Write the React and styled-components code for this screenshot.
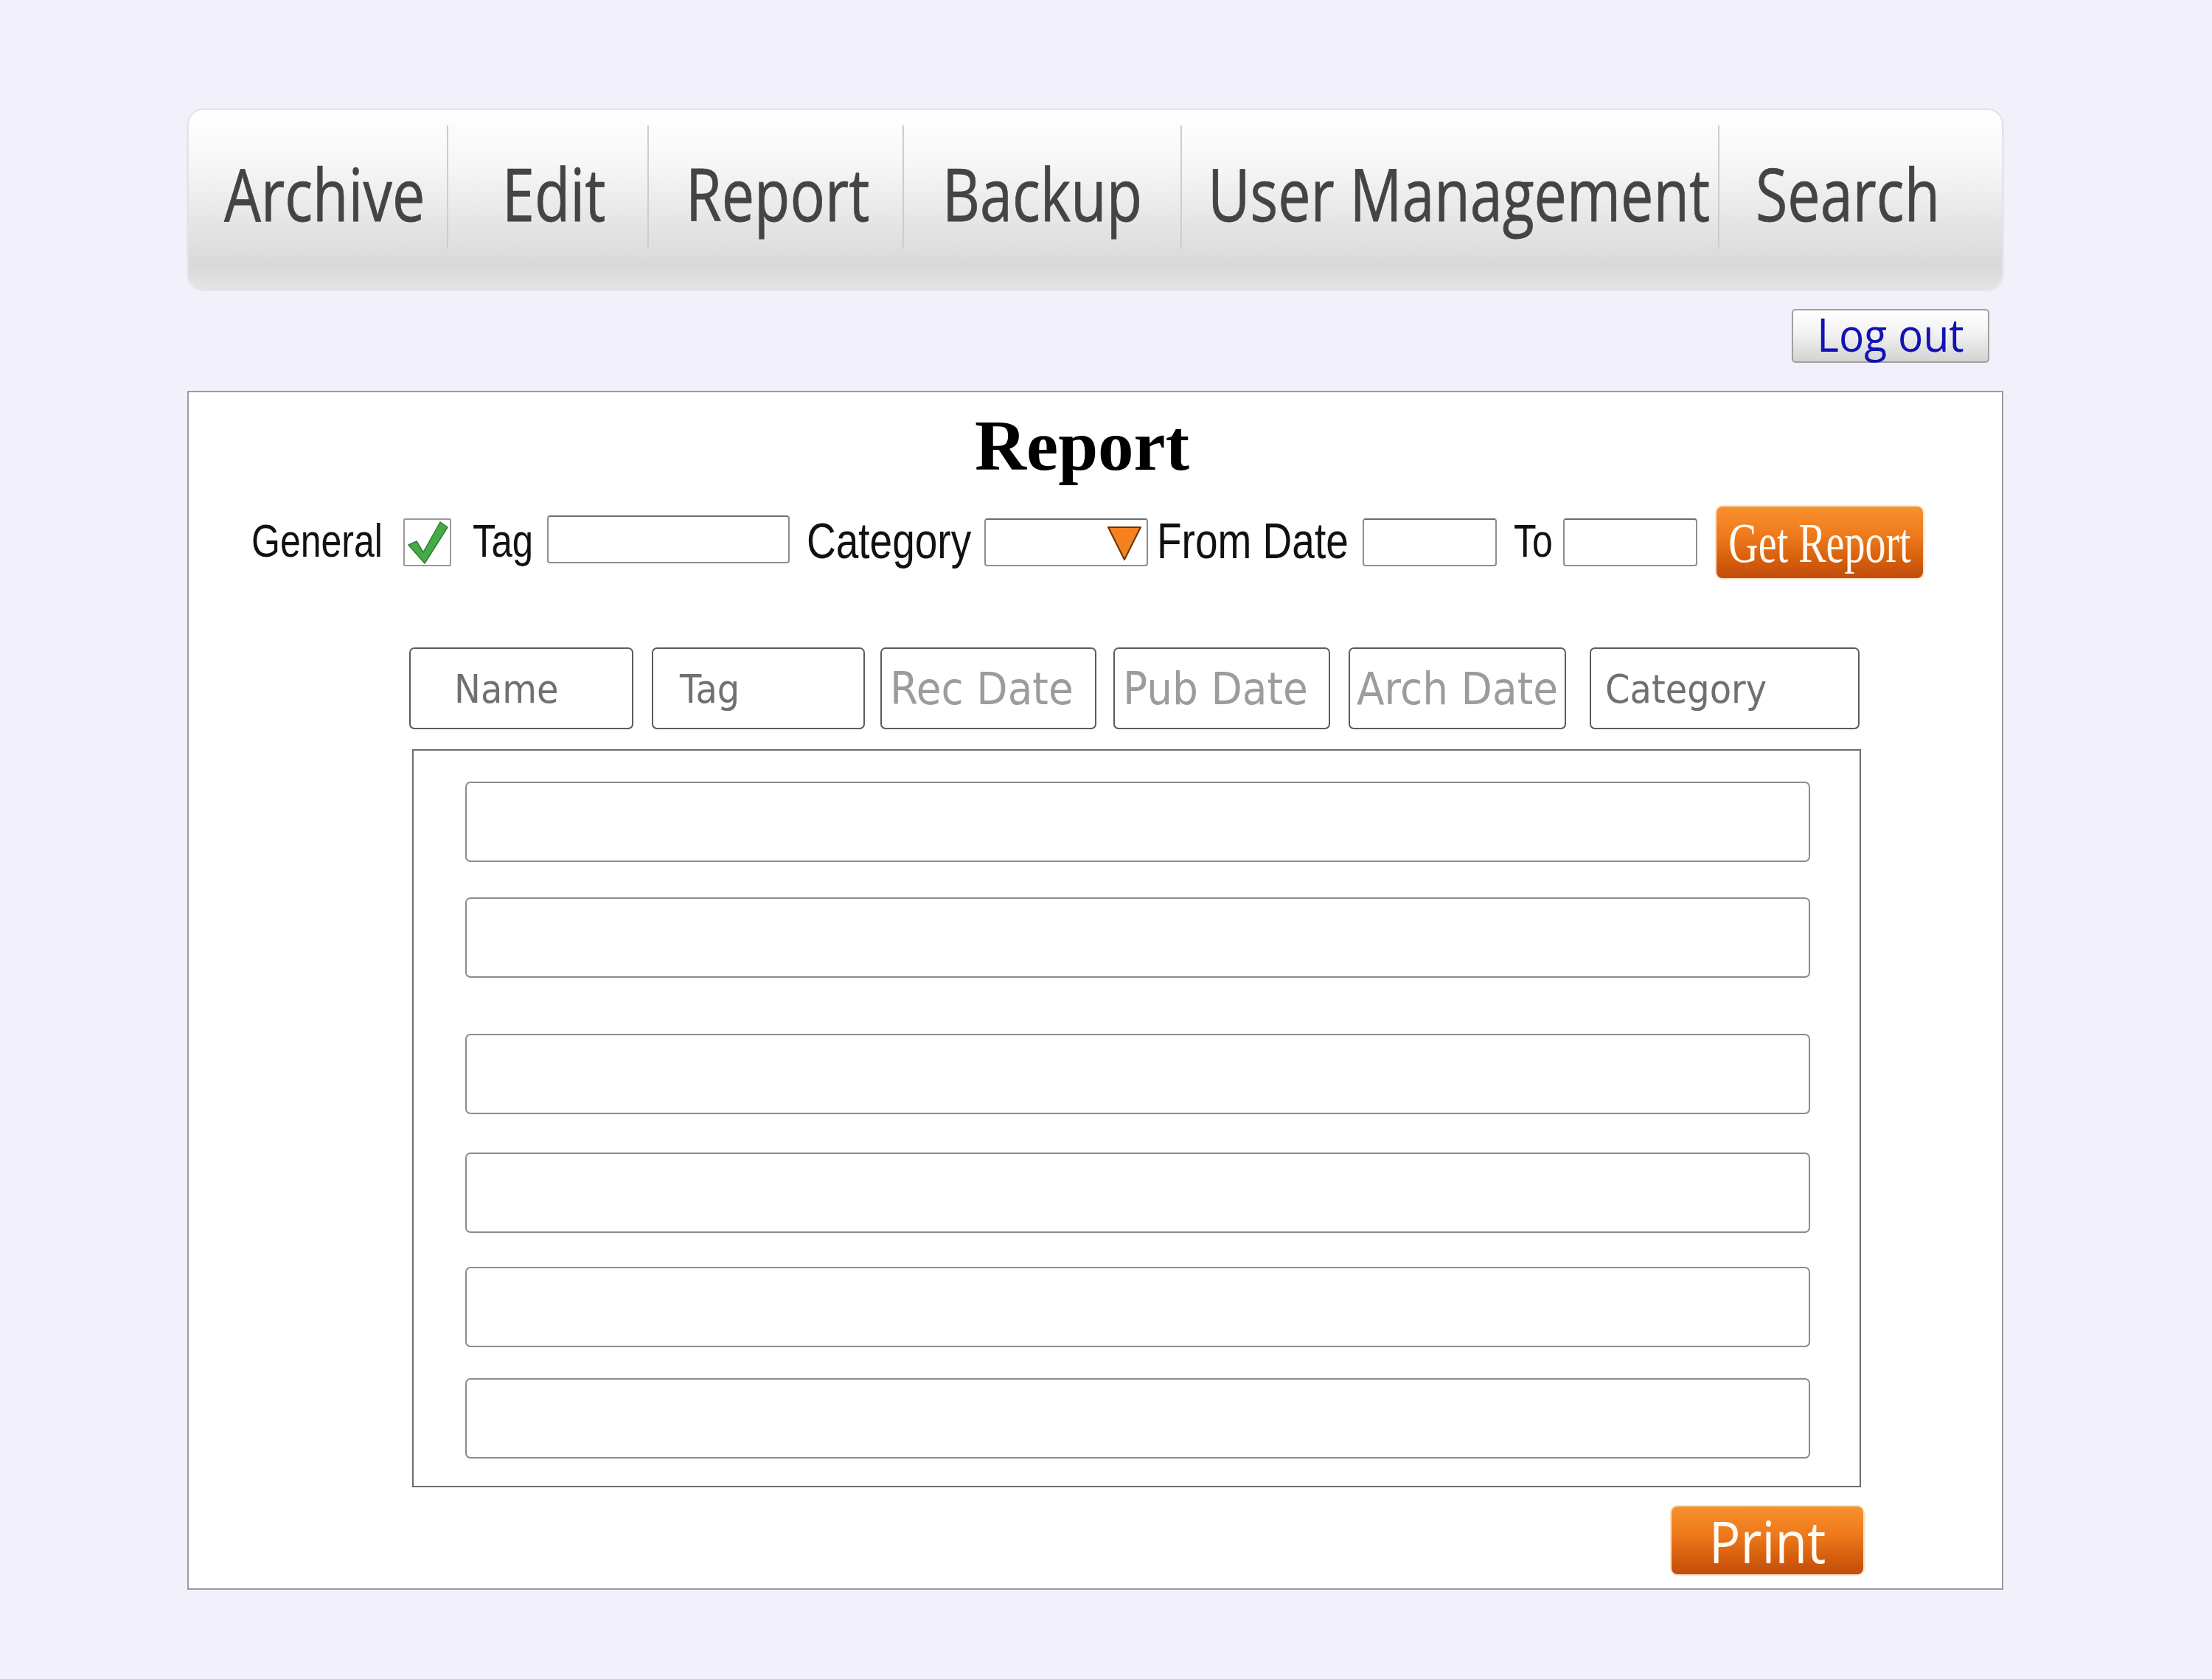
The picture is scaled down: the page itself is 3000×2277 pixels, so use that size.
import React from "react";
import styled, { createGlobalStyle } from "styled-components";

const GlobalStyle = createGlobalStyle`
  html, body {
    margin: 0;
    padding: 0;
    background: #f2f1fb;
  }
  * {
    box-sizing: border-box;
  }
`;

const navItems = [
  { label: "Archive", w: 352, pl: 48 },
  { label: "Edit", w: 272, pl: 73 },
  { label: "Report", w: 346, pl: 50 },
  { label: "Backup", w: 377, pl: 52 },
  { label: "User Management", w: 729, pl: 35 },
  { label: "Search", w: 383, pl: 49 },
];

const columns = [
  { label: "Name", w: 304, ml: 0, pl: 59, fs: 48, c: "#707070" },
  { label: "Tag", w: 289, ml: 25, pl: 36, fs: 48, c: "#707070" },
  { label: "Rec Date", w: 293, ml: 21, pl: 11, fs: 55, c: "#9c9c9c" },
  { label: "Pub Date", w: 294, ml: 23, pl: 11, fs: 55, c: "#9c9c9c" },
  { label: "Arch Date", w: 295, ml: 25, pl: 9, fs: 55, c: "#9c9c9c" },
  { label: "Category", w: 366, ml: 32, pl: 19, fs: 48, c: "#707070" },
];

// gap above each result row
const rowGaps = [0, 48, 76, 52, 46, 42];

const Page = styled.div`
  width: 3000px;
  min-height: 2277px;
  padding: 147px 283px 0 254px;
`;

const Nav = styled.nav`
  display: flex;
  align-items: flex-start;
  height: 245px;
  padding-top: 21px;
  border: 2px solid #e2e2ea;
  border-radius: 22px;
  background: linear-gradient(
    to bottom,
    #ffffff 0%,
    #f7f7f7 30%,
    #e6e6e6 62%,
    #d9d9d9 88%,
    #e4e4e4 100%
  );
  box-shadow: 0 2px 3px rgba(0, 0, 0, 0.08);
  overflow: hidden;
`;

const NavItem = styled.div`
  display: flex;
  align-items: center;
  width: ${(p) => p.$w}px;
  height: 167px;
  padding-left: ${(p) => p.$pl}px;
  padding-top: 16px;
  border-right: ${(p) => (p.$last ? "none" : "2px solid #cdcdcd")};
`;

const NavText = styled.span`
  display: inline-block;
  font-family: "Open Sans", "Noto Sans", sans-serif;
  font-size: 79px;
  line-height: 1;
  color: #444;
  white-space: nowrap;
  -webkit-text-stroke: 0.6px #444;
  transform: scaleY(1.25);
`;

const LogoutRow = styled.div`
  display: flex;
  justify-content: flex-end;
  margin-top: 27px;
  padding-right: 19px;
`;

const LogoutButton = styled.button`
  width: 268px;
  height: 73px;
  padding: 0 0 4px;
  border: 2px solid #a59f99;
  border-radius: 5px;
  background: linear-gradient(to bottom, #ffffff 0%, #f2f2f2 45%, #d3d3d3 100%);
  font-family: "Open Sans", "Noto Sans", sans-serif;
  font-size: 57px;
  line-height: 1;
  color: #1212b4;
  span {
    display: inline-block;
    transform: scaleY(1.1);
  }
`;

const Panel = styled.section`
  display: flex;
  flex-direction: column;
  height: 1626px;
  margin-top: 38px;
  padding-top: 24px;
  border: 2px solid #9c9c9c;
  background: #ffffff;
`;

const Title = styled.h1`
  margin: 0;
  padding-right: 36px;
  font-family: "Liberation Serif", "Times New Roman", serif;
  font-weight: bold;
  font-size: 97px;
  line-height: 97px;
  text-align: center;
  color: #000;
`;

const FilterRow = styled.div`
  display: flex;
  align-items: center;
  height: 97px;
  margin-top: 34px;
  padding-left: 85px;
`;

const Label = styled.span`
  display: inline-block;
  width: ${(p) => p.$w}px;
  margin-left: ${(p) => p.$ml || 0}px;
  margin-top: -4px;
  font-family: "Liberation Sans", Arial, sans-serif;
  font-size: ${(p) => p.$fs}px;
  line-height: 1;
  color: #111;
  white-space: nowrap;
  transform: scaleY(1.25);
`;

const CheckBox = styled.span`
  display: flex;
  align-items: center;
  justify-content: center;
  width: 65px;
  height: 65px;
  margin-left: ${(p) => p.$ml}px;
  border: 2px solid #9a9a9a;
  border-radius: 2px;
  background: #fff;
`;

const TextBox = styled.span`
  display: flex;
  align-items: center;
  justify-content: flex-end;
  width: ${(p) => p.$w}px;
  height: 65px;
  margin-left: ${(p) => p.$ml}px;
  margin-top: ${(p) => p.$mt || 0}px;
  padding-right: 6px;
  border: 2px solid #8e8e8e;
  border-top-color: #6e6e6e;
  border-radius: 4px;
  background: #fff;
`;

const OrangeButton = styled.button`
  display: flex;
  align-items: center;
  justify-content: center;
  width: ${(p) => p.$w}px;
  height: ${(p) => p.$h}px;
  margin-left: ${(p) => p.$ml || 0}px;
  padding: 0;
  border: none;
  border-radius: 8px;
  background: linear-gradient(to bottom, #f8912e 0%, #ee7a1c 40%, #d9620f 70%, #c24c0b 100%);
  box-shadow: 0 0 0 2px #fde3c8;
  color: #fffaf2;
  span {
    display: inline-block;
  }
`;

const GetReportText = styled.span`
  font-family: "Liberation Serif", "Times New Roman", serif;
  font-size: 56px;
  line-height: 1;
  transform: scaleY(1.35);
`;

const PrintText = styled.span`
  font-family: "Open Sans", "Noto Sans", sans-serif;
  font-size: 71px;
  line-height: 1;
  transform: scaleY(1.12);
`;

const Table = styled.div`
  display: flex;
  flex-direction: column;
  width: 1969px;
  margin-top: 94px;
  margin-left: 299px;
`;

const HeaderRow = styled.div`
  display: flex;
`;

const HeaderCell = styled.div`
  display: flex;
  align-items: center;
  width: ${(p) => p.$w}px;
  height: 111px;
  margin-left: ${(p) => p.$ml}px;
  padding-left: ${(p) => p.$pl}px;
  border: 2px solid #5c5c5c;
  border-radius: 7px;
  background: #fff;
  font-family: "DejaVu Sans", Verdana, sans-serif;
  font-size: ${(p) => p.$fs}px;
  color: ${(p) => p.$c};
  white-space: nowrap;
  span {
    display: inline-block;
    transform: scaleY(1.1);
  }
`;

const ResultList = styled.div`
  display: flex;
  flex-direction: column;
  width: 1965px;
  height: 1001px;
  margin-top: 27px;
  margin-left: 4px;
  padding: 42px 67px 0 70px;
  border: 2px solid #6c6c6c;
`;

const ResultRow = styled.div`
  height: 109px;
  margin-top: ${(p) => p.$mt}px;
  border: 2px solid #8c8c8c;
  border-radius: 7px;
  background: #fff;
`;

const PrintRow = styled.div`
  display: flex;
  justify-content: flex-end;
  margin-top: 26px;
  margin-right: -3px;
`;

const Check = () => (
  <svg width="58" height="60" viewBox="0 0 58 60">
    <path
      d="M3 33 L14 28 L23 43 L46 2 L56 9 L25 58 Z"
      fill="#45aa47"
      stroke="#2f7d31"
      strokeWidth="1.5"
      strokeLinejoin="round"
    />
  </svg>
);

const DropArrow = () => (
  <svg width="48" height="50" viewBox="0 0 48 50">
    <path d="M2 4 L46 4 L24 48 Z" fill="#f5821f" stroke="#6a3204" strokeWidth="2" strokeLinejoin="round" />
  </svg>
);

export default function App() {
  return (
    <>
      <GlobalStyle />
      <Page>
        <Nav>
          {navItems.map((item, i) => (
            <NavItem key={item.label} $w={item.w} $pl={item.pl} $last={i === navItems.length - 1}>
              <NavText>{item.label}</NavText>
            </NavItem>
          ))}
        </Nav>

        <LogoutRow>
          <LogoutButton>
            <span>Log out</span>
          </LogoutButton>
        </LogoutRow>

        <Panel>
          <Title>Report</Title>

          <FilterRow>
            <Label $w={176} $fs={50}>General</Label>
            <CheckBox $ml={30}>
              <Check />
            </CheckBox>
            <Label $w={88} $ml={29} $fs={51}>Tag</Label>
            <TextBox $w={329} $ml={13} $mt={-8} />
            <Label $w={226} $ml={23} $fs={55}>Category</Label>
            <TextBox $w={222} $ml={15}>
              <DropArrow />
            </TextBox>
            <Label $w={264} $ml={12} $fs={55}>From Date</Label>
            <TextBox $w={182} $ml={15} />
            <Label $w={57} $ml={23} $fs={50}>To</Label>
            <TextBox $w={182} $ml={10} />
            <OrangeButton $w={280} $h={97} $ml={26}>
              <GetReportText>Get Report</GetReportText>
            </OrangeButton>
          </FilterRow>

          <Table>
            <HeaderRow>
              {columns.map((col) => (
                <HeaderCell key={col.label} $w={col.w} $ml={col.ml} $pl={col.pl} $fs={col.fs} $c={col.c}>
                  <span>{col.label}</span>
                </HeaderCell>
              ))}
            </HeaderRow>

            <ResultList>
              {rowGaps.map((gap, i) => (
                <ResultRow key={i} $mt={gap} />
              ))}
            </ResultList>

            <PrintRow>
              <OrangeButton $w={260} $h={92}>
                <PrintText>Print</PrintText>
              </OrangeButton>
            </PrintRow>
          </Table>
        </Panel>
      </Page>
    </>
  );
}
